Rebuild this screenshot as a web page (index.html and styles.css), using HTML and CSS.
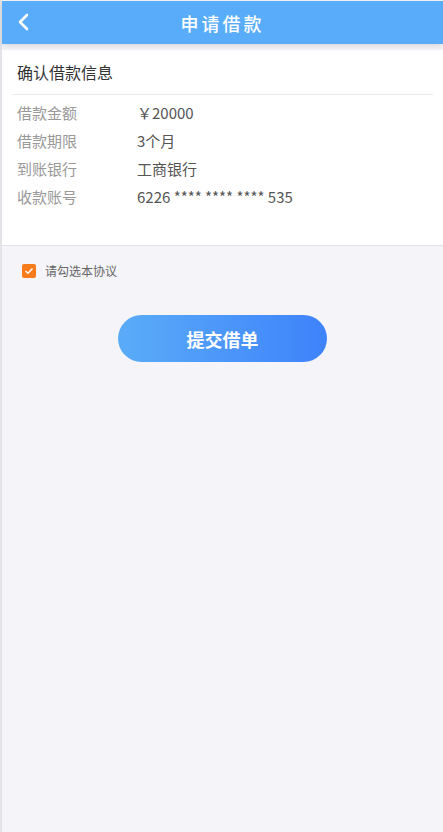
FILE: index.html
```html
<!DOCTYPE html>
<html lang="zh">

<head>
    <meta charset="UTF-8">
    <title>申请借款</title>
    <link rel="stylesheet" href="styles.css">
</head>

<body>
    <div class="side"></div>
    <div class="app">
        <header class="topbar">
            <a class="back" href="#">
                <svg width="12" height="18" viewBox="0 0 12 18">
                    <path d="M10 2 L3 9 L10 16" fill="none" stroke="#fff" stroke-width="2.6" stroke-linecap="round" stroke-linejoin="round" />
                </svg>
            </a>
            <h1>申请借款</h1>
        </header>

        <section class="card">
            <h2>确认借款信息</h2>
            <div class="rows">
                <div class="row"><span class="lbl">借款金额</span><span class="val">￥20000</span></div>
                <div class="row"><span class="lbl">借款期限</span><span class="val">3个月</span></div>
                <div class="row"><span class="lbl">到账银行</span><span class="val">工商银行</span></div>
                <div class="row"><span class="lbl">收款账号</span><span class="val">6226 **** **** **** 535</span></div>
            </div>
        </section>

        <label class="agree">
            <span class="box">
                <svg width="10" height="8" viewBox="0 0 10 8">
                    <path d="M1.5 4 L4 6.3 L8.5 1.5" fill="none" stroke="#fff" stroke-width="1.4" />
                </svg>
            </span>
            请勾选本协议
        </label>

        <div class="submit">
            <button>提交借单</button>
        </div>
    </div>
</body>

</html>
```

FILE: styles.css
```css
html,
body {
    margin: 0;
    height: 100%;
}

body {
    display: flex;
    background-color: #f5f4f9;
    font-family: "Noto Sans CJK SC", "Noto Sans", sans-serif;
}

.side {
    width: 2px;
    background-color: #e4e3e8;
}

.app {
    flex: 1;
    padding-top: 1px;
}

.topbar {
    position: relative;
    height: 43px;
    background-color: #58acfa;
    display: flex;
    align-items: center;
    justify-content: center;
    box-shadow: 0 2px 6px rgba(0, 0, 0, .12);
    z-index: 1;
}

.topbar h1 {
    margin: 0;
    color: #fff;
    font-size: 18px;
    font-weight: 500;
    letter-spacing: 3px;
}

.back {
    position: absolute;
    left: 15px;
    top: 12px;
    display: flex;
}

.card {
    background-color: #fff;
    margin-top: 6px;
    padding: 0 10px 35px;
    border-bottom: 1px solid #e2e2e6;
}

.card h2 {
    margin: 0;
    padding: 11px 5px 10px;
    font-size: 16px;
    font-weight: 400;
    color: #333;
    line-height: 23px;
    border-bottom: 1px solid #ebebeb;
}

.rows {
    padding: 3px 5px 0;
}

.row {
    display: flex;
    height: 28px;
    align-items: center;
    font-size: 15px;
}

.lbl {
    width: 120px;
    color: #999;
}

.val {
    color: #555;
}

.agree {
    display: flex;
    align-items: center;
    gap: 9px;
    margin: 16px 0 0 20px;
    font-size: 12px;
    color: #666;
}

.box {
    width: 14px;
    height: 14px;
    border-radius: 2px;
    background-color: #fa7b1c;
    display: flex;
    align-items: center;
    justify-content: center;
}

.submit {
    display: flex;
    justify-content: center;
    margin-top: 36px;
}

.submit button {
    width: 209px;
    height: 47px;
    border: none;
    border-radius: 24px;
    background: linear-gradient(90deg, #5aacf8, #3e82fb);
    color: #fff;
    font-family: inherit;
    font-size: 18px;
    font-weight: 700;
}
```
